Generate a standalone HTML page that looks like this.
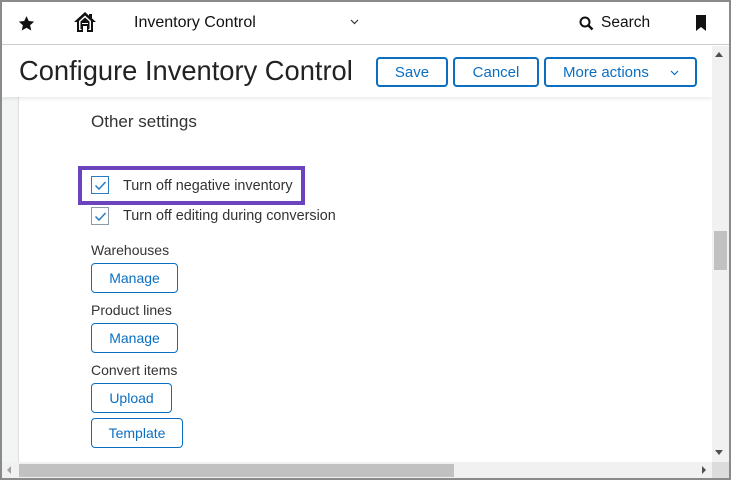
<!DOCTYPE html>
<html><head><meta charset="utf-8"><style>
*{box-sizing:border-box;margin:0;padding:0}
body{width:731px;height:480px;overflow:hidden;font-family:"Liberation Sans",Arial,sans-serif;background:#fff;position:relative;color:#222}
.frame{position:absolute;left:0;top:0;width:731px;height:480px;border:2px solid #8a8a8a}
.abs{position:absolute}
.btn{position:absolute;border:1.5px solid #0a6fc2;border-radius:4px;color:#0a6fc2;font-size:14px;display:flex;align-items:center;justify-content:center;background:#fff}
.lbl{position:absolute;font-size:14px;color:#333}
.cb{position:absolute;width:18px;height:18px;border:1px solid #8a9aa8;background:#fff}
</style></head><body>
<div class="abs" style="left:2px;top:2px;width:727px;height:43px;background:#fff;border-bottom:1px solid #ccc"></div>
<svg class="abs" style="left:18px;top:15px" width="17" height="17" viewBox="0 0 24 24"><path d="M12 1.5l3.2 7 7.6.8-5.7 5.1 1.6 7.5L12 18l-6.7 3.9 1.6-7.5L1.2 9.3l7.6-.8z" fill="#111"/></svg>
<svg class="abs" style="left:73px;top:11px" width="24" height="22" viewBox="0 0 24 22"><path d="M12 1L1 11h3v10h6v-6h4v6h6V11h3l-4-3.6V3h-3v1.7z" fill="#111"/><path d="M12 4.5L6 10v9h2.5v-6h7v6H18v-9z" fill="#fff"/><path d="M12 6.5L7.5 10.5V18h1.5v-6h6v6h1.5v-7.5z" fill="#111"/></svg>
<div class="abs" style="left:134px;top:14px;font-size:16px;color:#111">Inventory Control</div>
<svg class="abs" style="left:350px;top:19px" width="9" height="6" viewBox="0 0 9 6"><path d="M1 1l3.5 3.5L8 1" fill="none" stroke="#333" stroke-width="1.2"/></svg>
<svg class="abs" style="left:579px;top:16px" width="15" height="15" viewBox="0 0 15 15"><circle cx="6" cy="6" r="4.5" fill="none" stroke="#111" stroke-width="2"/><path d="M9.5 9.5l4 4" stroke="#111" stroke-width="2.4"/></svg>
<div class="abs" style="left:601px;top:14px;font-size:15.5px;color:#111">Search</div>
<svg class="abs" style="left:695px;top:15px" width="12" height="16" viewBox="0 0 12 16"><path d="M1 0h10v16l-5-4-5 4z" fill="#111"/></svg>
<div class="abs" style="left:2px;top:46px;width:17px;height:416px;background:#f3f4f4;border-right:1px solid #dde0e2"></div>
<div class="abs" style="left:2px;top:46px;width:710px;height:51px;background:#fff;box-shadow:0 2px 3px rgba(0,0,0,.08)"></div>
<div class="abs" style="left:19px;top:55px;font-size:27.3px;color:#222">Configure Inventory Control</div>
<div class="btn" style="left:376px;top:57px;width:72px;height:30px;border-width:2px;font-size:15px">Save</div>
<div class="btn" style="left:453px;top:57px;width:86px;height:30px;border-width:2px;font-size:15px">Cancel</div>
<div class="btn" style="left:544px;top:57px;width:153px;height:30px;border-width:2px;font-size:15px;justify-content:flex-start;padding-left:17px">More actions<svg style="position:absolute;left:124px;top:11px" width="9" height="6" viewBox="0 0 9 6"><path d="M1 1l3.5 3.5L8 1" fill="none" stroke="#0a6fc2" stroke-width="1.2"/></svg></div>
<div class="abs" style="left:91px;top:112px;font-size:17px;color:#333">Other settings</div>
<div class="abs" style="left:78px;top:166px;width:227px;height:39px;border:4px solid #6b44bd"></div>
<div class="cb" style="left:91px;top:176px;border-color:#2b7bc4"></div>
<svg class="abs" style="left:94px;top:180px" width="13" height="11" viewBox="0 0 13 11"><path d="M1.5 5.5l3.5 3.5 6.5-7" fill="none" stroke="#2b7bc4" stroke-width="1.5"/></svg>
<div class="lbl" style="left:123px;top:178px;font-size:14.4px">Turn off negative inventory</div>
<div class="cb" style="left:91px;top:207px"></div>
<svg class="abs" style="left:94px;top:211px" width="13" height="11" viewBox="0 0 13 11"><path d="M1.5 5.5l3.5 3.5 6.5-7" fill="none" stroke="#2b7bc4" stroke-width="1.5"/></svg>
<div class="lbl" style="left:123px;top:208px;font-size:14.4px">Turn off editing during conversion</div>
<div class="lbl" style="left:91px;top:242px">Warehouses</div>
<div class="btn" style="left:91px;top:263px;width:87px;height:30px">Manage</div>
<div class="lbl" style="left:91px;top:302px">Product lines</div>
<div class="btn" style="left:91px;top:323px;width:87px;height:30px">Manage</div>
<div class="lbl" style="left:91px;top:362px">Convert items</div>
<div class="btn" style="left:91px;top:383px;width:81px;height:30px">Upload</div>
<div class="btn" style="left:91px;top:418px;width:92px;height:30px">Template</div>
<div class="abs" style="left:712px;top:46px;width:17px;height:416px;background:#f1f1f1"></div>
<div class="abs" style="left:714px;top:231px;width:13px;height:39px;background:#c1c1c1"></div>
<div class="abs" style="left:715px;top:52px;width:0;height:0;border-left:4px solid transparent;border-right:4px solid transparent;border-bottom:5px solid #505050"></div>
<div class="abs" style="left:715px;top:450px;width:0;height:0;border-left:4px solid transparent;border-right:4px solid transparent;border-top:5px solid #505050"></div>
<div class="abs" style="left:2px;top:462px;width:710px;height:16px;background:#f1f1f1"></div>
<div class="abs" style="left:712px;top:462px;width:17px;height:16px;background:#dcdcdc"></div>
<div class="abs" style="left:19px;top:464px;width:435px;height:13px;background:#c1c1c1"></div>
<div class="abs" style="left:7px;top:466px;width:0;height:0;border-top:4px solid transparent;border-bottom:4px solid transparent;border-right:4px solid #a3a3a3"></div>
<div class="abs" style="left:702px;top:466px;width:0;height:0;border-top:4px solid transparent;border-bottom:4px solid transparent;border-left:4px solid #505050"></div>
<div class="frame"></div>
</body></html>
